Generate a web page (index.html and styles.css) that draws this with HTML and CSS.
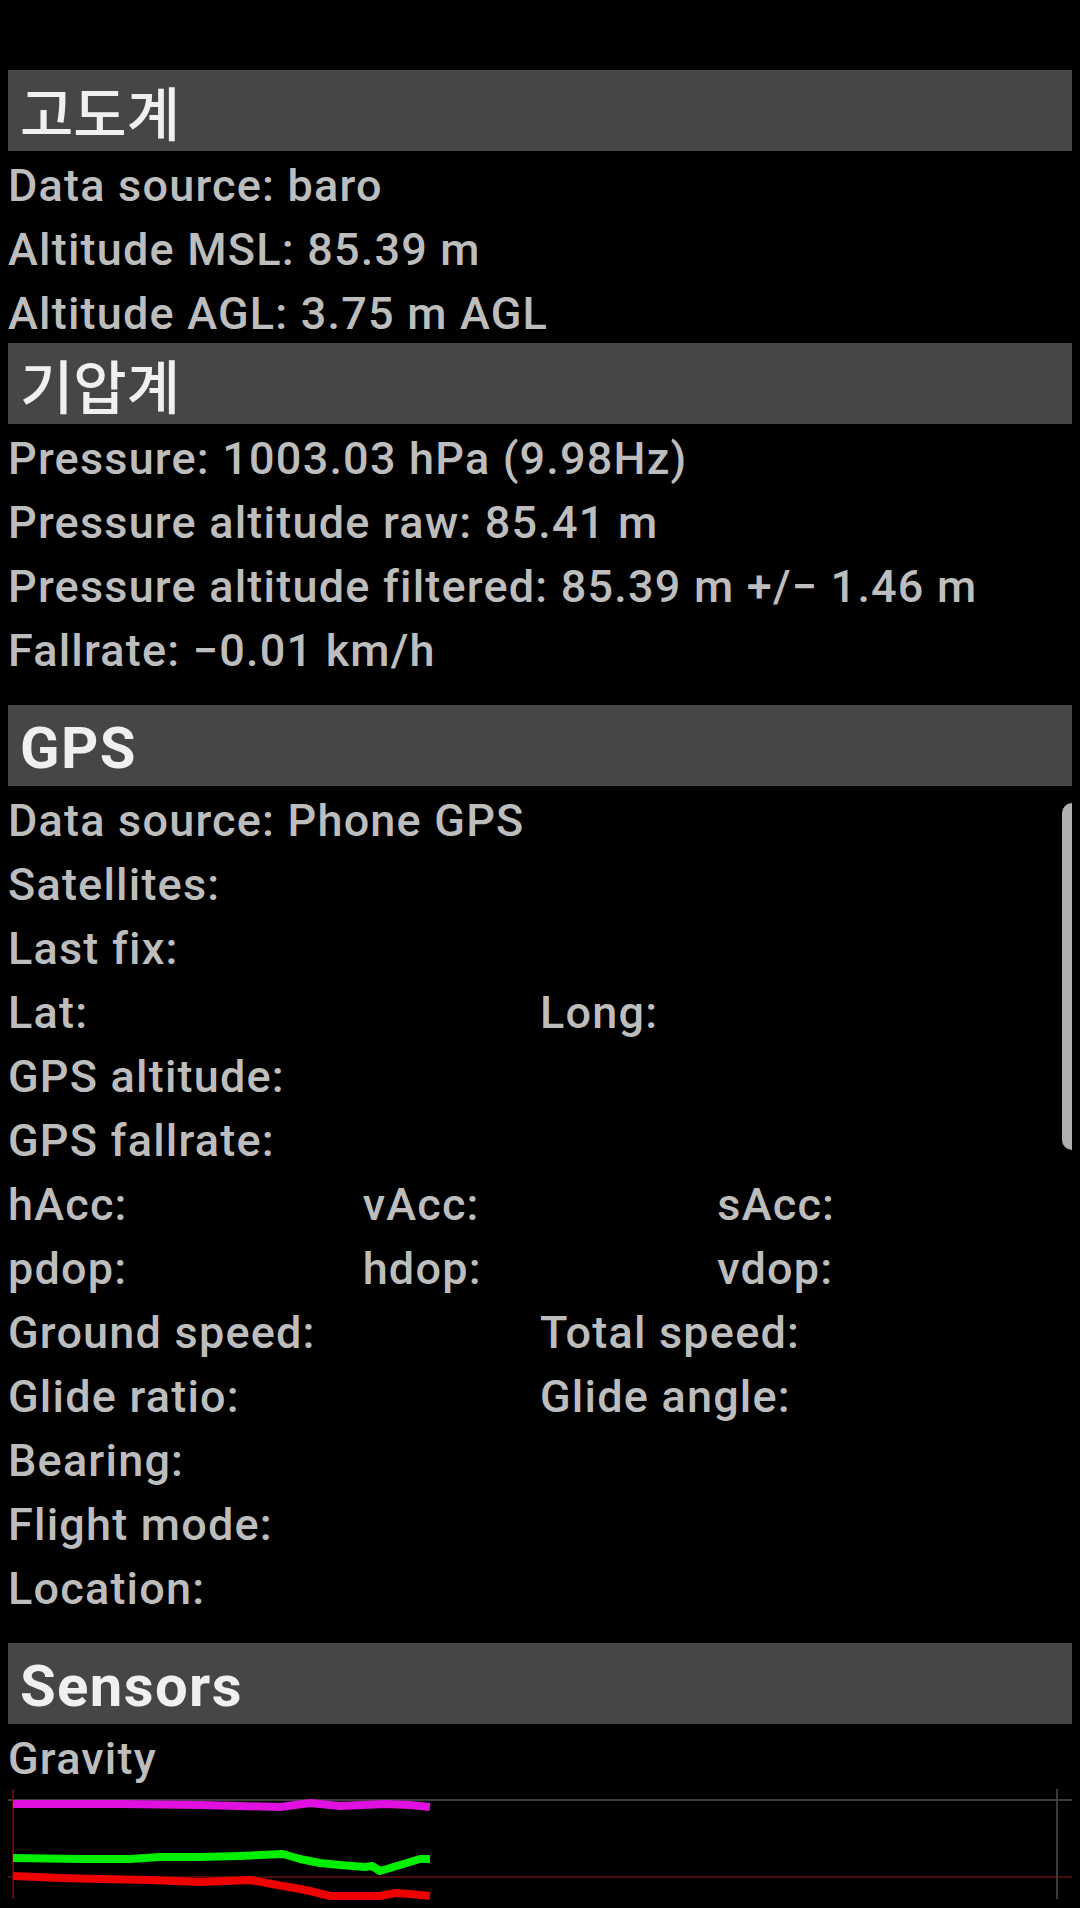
FILE: index.html
```html
<!doctype html>
<html lang="ko">
<head>
  <meta charset="UTF-8">
  <meta name="viewport" content="width=device-width, initial-scale=1.0">
  <title>Sensor Status</title>
  <link rel="stylesheet" href="styles.css">
</head>
<body>
  <div class="page">
    <div class="section">
      <h2 class="title ko">고도계</h2>
      <div class="row">Data source: baro</div>
      <div class="row">Altitude MSL: 85.39 m</div>
      <div class="row">Altitude AGL: 3.75 m AGL</div>
    </div>

    <div class="section">
      <h2 class="title ko">기압계</h2>
      <div class="row">Pressure: 1003.03 hPa (9.98Hz)</div>
      <div class="row">Pressure altitude raw: 85.41 m</div>
      <div class="row">Pressure altitude filtered: 85.39 m +/− 1.46 m</div>
      <div class="row">Fallrate: −0.01 km/h</div>
    </div>

    <div class="section spaced">
      <h2 class="title">GPS</h2>
      <div class="row">Data source: Phone GPS</div>
      <div class="row">Satellites:</div>
      <div class="row">Last fix:</div>
      <div class="row cols2"><span>Lat:</span><span>Long:</span></div>
      <div class="row">GPS altitude:</div>
      <div class="row">GPS fallrate:</div>
      <div class="row cols3"><span>hAcc:</span><span>vAcc:</span><span>sAcc:</span></div>
      <div class="row cols3"><span>pdop:</span><span>hdop:</span><span>vdop:</span></div>
      <div class="row cols2"><span>Ground speed:</span><span>Total speed:</span></div>
      <div class="row cols2"><span>Glide ratio:</span><span>Glide angle:</span></div>
      <div class="row">Bearing:</div>
      <div class="row">Flight mode:</div>
      <div class="row">Location:</div>
    </div>

    <div class="section spaced">
      <h2 class="title">Sensors</h2>
      <div class="row">Gravity</div>
      <div class="chart">
        <svg width="1064" height="120" viewBox="8 1789 1064 120">
          <!-- grid -->
          <line x1="8" y1="1801" x2="1072" y2="1801" stroke="#3c3c3c" stroke-width="2"/>
          <line x1="8" y1="1878" x2="1072" y2="1878" stroke="#4a0c0c" stroke-width="2"/>
          <line x1="13" y1="1790" x2="13" y2="1900" stroke="#5a0a0a" stroke-width="2"/>
          <line x1="1057" y1="1790" x2="1057" y2="1900" stroke="#3c3c3c" stroke-width="2"/>
          <!-- x, y, z -->
          <polyline fill="none" stroke="#ee0000" stroke-width="8" stroke-linejoin="round"
            points="13,1877 60,1879 100,1880 150,1881 200,1883 250,1881 283,1887 300,1890 310,1892 330,1897 380,1897 395,1894 410,1895 430,1897"/>
          <polyline fill="none" stroke="#00ee00" stroke-width="8" stroke-linejoin="round"
            points="13,1859 80,1860 130,1860 160,1858 200,1858 240,1857 283,1855 300,1860 320,1864 340,1866 365,1868 372,1867 380,1872 400,1866 420,1860 430,1860"/>
          <polyline fill="none" stroke="#e010e0" stroke-width="8" stroke-linejoin="round"
            points="13,1805 120,1805 200,1806 280,1808 310,1804 340,1807 385,1805 410,1806 430,1808"/>
        </svg>
      </div>
    </div>

    <div class="scrollbar"></div>
  </div>
</body>
</html>
```

FILE: styles.css
```css
html, body {
  margin: 0;
  background-color: #000;
}

body {
  color: #bdbdbd;
  font-family: Roboto, "Noto Sans CJK KR", sans-serif;
  overflow: hidden;
}

.page {
  position: relative;
  padding: 70px 8px 0;
  height: 1838px;
  overflow: hidden;
}

.section.spaced {
  margin-top: 25px;
}

.title {
  margin: 0;
  height: 77px;
  padding: 4px 0 0 12px;
  display: flex;
  align-items: center;
  background-color: #464646;
  color: #f0f0f0;
  font-size: 58px;
  font-weight: bold;
  letter-spacing: 1.4px;
}

.title.ko {
  height: 81px;
  padding-top: 0;
  font-weight: 500;
  letter-spacing: 0;
}

.row {
  height: 61px;
  padding-top: 3px;
  line-height: 64px;
  font-size: 45px;
  font-weight: 500;
  letter-spacing: 1.2px;
  white-space: nowrap;
}

.cols2 {
  display: grid;
  grid-template-columns: 1fr 1fr;
}

.cols3 {
  display: grid;
  grid-template-columns: 1fr 1fr 1fr;
}

.chart svg {
  display: block;
}

.scrollbar {
  position: absolute;
  right: 8px;
  top: 803px;
  width: 10px;
  height: 347px;
  background-color: #b0b0b0;
  border-radius: 10px 0 0 10px;
}
```
